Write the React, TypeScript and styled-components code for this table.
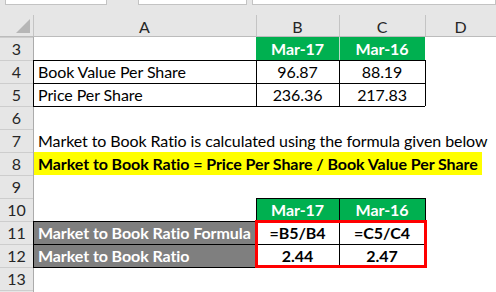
import React from "react";
import styled, { createGlobalStyle } from "styled-components";

const Global = createGlobalStyle`
  html, body { margin: 0; padding: 0; background: #ffffff; }
  body { width: 496px; height: 292px; overflow: hidden; font-family: Lato, "Open Sans", sans-serif; }
`;

const Page = styled.div`
  width: 496px;
  height: 292px;
  overflow: hidden;
  display: flex;
  flex-direction: column;
`;

const TopBar = styled.div`
  height: 15px;
  flex: none;
  background: #e6e6e6;
  display: flex;
  align-items: flex-start;
  padding-left: 5px;
`;

const FieldBox = styled.div<{ $w?: number; $gap?: number }>`
  height: 4px;
  background: #ffffff;
  border: 1px solid #c3c3c3;
  border-top: none;
  margin-left: ${(p) => p.$gap ?? 0}px;
  ${(p) => (p.$w ? `width: ${p.$w}px; flex: none;` : `flex: 1;`)}
`;

const Sheet = styled.div`
  display: grid;
  grid-template-columns: 33px 223px 83px 86px 1fr;
  grid-template-rows: 22px repeat(11, 23px) 2px;
  background: #ffffff;
  flex: none;
`;

const ColHead = styled.div<{ $left?: boolean }>`
  background: #e6e6e6;
  color: #262626;
  font-size: 16px;
  display: flex;
  align-items: center;
  justify-content: center;
  box-shadow: inset 0 -1px 0 #bcbcbc
    ${(p) => (p.$left ? ", inset 1px 0 0 #c4c4c4" : "")};
`;

const Corner = styled.div`
  background: #e6e6e6;
  box-shadow: inset 0 -1px 0 #bcbcbc;
  display: flex;
  align-items: flex-end;
  justify-content: flex-end;
  padding: 0 3px 4px 0;
`;

const RowHead = styled.div<{ $row: number }>`
  grid-column: 1;
  grid-row: ${(p) => p.$row};
  background: #e6e6e6;
  color: #262626;
  font-size: 16px;
  display: flex;
  align-items: center;
  justify-content: center;
  box-shadow: inset 0 1px 0 #cdcdcd;
  overflow: hidden;
`;

type CellProps = {
  $row: number;
  $col: string;
  $bg?: string;
  $color?: string;
  $bold?: boolean;
  $align?: "left" | "center";
  $top?: string;
  $left?: string;
};

const Cell = styled.div<CellProps>`
  grid-row: ${(p) => p.$row};
  grid-column: ${(p) => p.$col};
  background: ${(p) => p.$bg ?? "transparent"};
  color: ${(p) => p.$color ?? "#000000"};
  font-weight: ${(p) => (p.$bold ? 700 : 400)};
  font-size: 16px;
  letter-spacing: -0.08px;
  display: flex;
  align-items: center;
  justify-content: ${(p) => (p.$align === "center" ? "center" : "flex-start")};
  padding: 0 0 0 ${(p) => (p.$align === "center" ? 0 : 5)}px;
  white-space: nowrap;
  box-shadow: inset 0 1px 0 ${(p) => p.$top ?? "transparent"},
    inset 1px 0 0 ${(p) => p.$left ?? "transparent"};
`;

const Highlight = styled.span`
  background: #ffff00;
  font-weight: 700;
  align-self: stretch;
  display: inline-flex;
  align-items: center;
  padding: 0 4px;
  margin-left: -4px;
`;

const RedFrame = styled.div<{ $col: string; $row: string }>`
  grid-column: ${(p) => p.$col};
  grid-row: ${(p) => p.$row};
  margin: -1px -2px -1px -1px;
  border: 3px solid #ff0000;
  z-index: 1;
  pointer-events: none;
`;

const B = "#000000";
const GRID = "#ababab";
const GREEN = "#00b050";
const GREY = "#7f7f7f";

type C = {
  text?: string;
  bg?: string;
  color?: string;
  bold?: boolean;
  align?: "left" | "center";
  top?: string;
  left?: string;
  span?: number;
  hl?: boolean;
};

const rows: { n: number; label: string; cells: C[] }[] = [
  {
    n: 3,
    label: "3",
    cells: [
      { left: GRID },
      { text: "Mar-17", bg: GREEN, color: "#fff", bold: true, align: "center" },
      { text: "Mar-16", bg: GREEN, color: "#fff", bold: true, align: "center", left: "#b9dcc6" },
      {},
    ],
  },
  {
    n: 4,
    label: "4",
    cells: [
      { text: "Book Value Per Share", top: B, left: B },
      { text: "96.87", align: "center", top: B, left: B },
      { text: "88.19", align: "center", top: B, left: B },
      { left: B },
    ],
  },
  {
    n: 5,
    label: "5",
    cells: [
      { text: "Price Per Share", top: B, left: B },
      { text: "236.36", align: "center", top: B, left: B },
      { text: "217.83", align: "center", top: B, left: B },
      { left: B },
    ],
  },
  { n: 6, label: "6", cells: [{ top: B, left: GRID }, { top: B }, { top: B }, {}] },
  {
    n: 7,
    label: "7",
    cells: [
      { text: "Market to Book Ratio is calculated using the formula given below", left: GRID, span: 4 },
    ],
  },
  {
    n: 8,
    label: "8",
    cells: [
      { text: "Market to Book Ratio = Price Per Share / Book Value Per Share", hl: true, left: GRID, span: 4 },
    ],
  },
  { n: 9, label: "9", cells: [{ left: GRID }, {}, {}, {}] },
  {
    n: 10,
    label: "10",
    cells: [
      { left: GRID },
      { text: "Mar-17", bg: GREEN, color: "#fff", bold: true, align: "center", top: B, left: B },
      { text: "Mar-16", bg: GREEN, color: "#fff", bold: true, align: "center", top: B, left: B },
      { left: B },
    ],
  },
  {
    n: 11,
    label: "11",
    cells: [
      { text: "Market to Book Ratio Formula", bg: GREY, color: "#fff", bold: true, top: B, left: B },
      { text: "=B5/B4", bold: true, align: "center", top: B, left: B },
      { text: "=C5/C4", bold: true, align: "center", top: B, left: B },
      {},
    ],
  },
  {
    n: 12,
    label: "12",
    cells: [
      { text: "Market to Book Ratio", bg: GREY, color: "#fff", bold: true, top: B, left: B },
      { text: "2.44", bold: true, align: "center", top: B, left: B },
      { text: "2.47", bold: true, align: "center", top: B, left: B },
      {},
    ],
  },
  { n: 13, label: "13", cells: [{ top: B, left: GRID }, { top: B }, { top: B }, {}] },
  { n: 14, label: "", cells: [{ left: GRID }, {}, {}, {}] },
];

export default function App() {
  return (
    <Page>
      <Global />
      <TopBar>
        <FieldBox $w={100} />
        <FieldBox $w={107} $gap={31} />
        <FieldBox $gap={5} />
      </TopBar>
      <Sheet>
        <Corner>
          <svg width="14" height="14" viewBox="0 0 14 14">
            <polygon points="14,0 14,14 0,14" fill="#b6b6b6" />
          </svg>
        </Corner>
        <ColHead $left>A</ColHead>
        <ColHead $left>B</ColHead>
        <ColHead $left>C</ColHead>
        <ColHead $left>D</ColHead>
        {rows.map((r, ri) => {
          const gridRow = ri + 2;
          let col = 2;
          return (
            <React.Fragment key={r.n}>
              <RowHead $row={gridRow}>{r.label}</RowHead>
              {r.cells.map((c, i) => {
                const span = c.span ?? 1;
                const colSpec = `${col} / span ${span}`;
                col += span;
                return (
                  <Cell
                    key={i}
                    $row={gridRow}
                    $col={colSpec}
                    $bg={c.bg}
                    $color={c.color}
                    $bold={c.bold}
                    $align={c.align}
                    $top={c.top}
                    $left={c.left}
                  >
                    {c.hl ? <Highlight>{c.text}</Highlight> : c.text}
                  </Cell>
                );
              })}
            </React.Fragment>
          );
        })}
        <RedFrame $col="3 / 5" $row="10 / 12" />
      </Sheet>
    </Page>
  );
}
